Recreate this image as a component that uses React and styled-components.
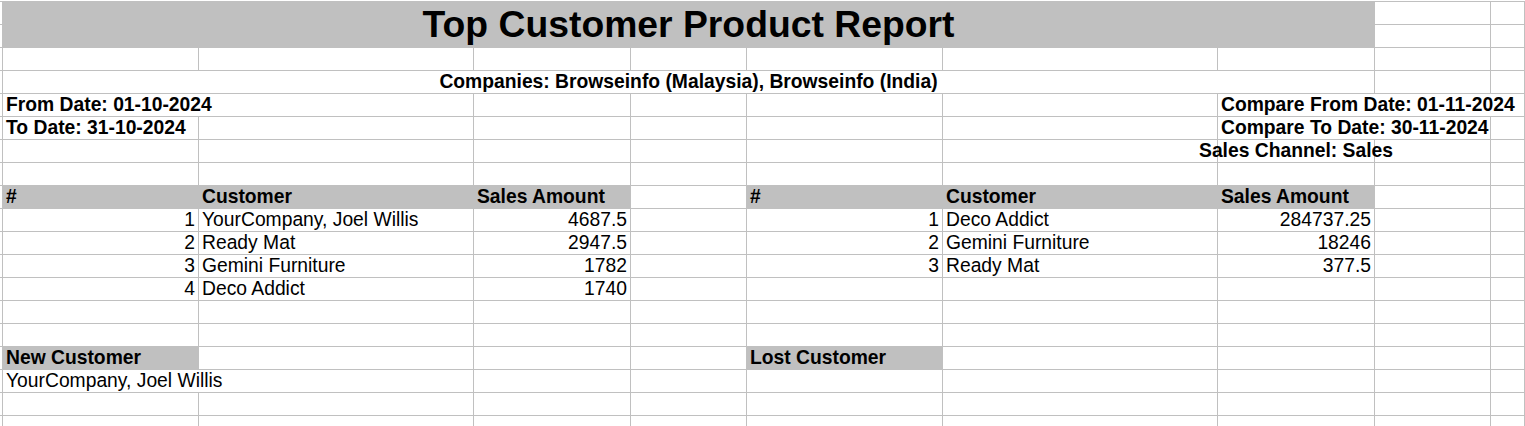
import React from "react";
import styled, { createGlobalStyle } from "styled-components";

/* ================= GLOBAL ================= */

const GlobalStyle = createGlobalStyle`
  html, body {
    margin: 0;
    padding: 0;
    background: #ffffff;
    overflow: hidden;
  }
  body {
    font-family: "Liberation Sans", Arial, sans-serif;
    color: #000000;
  }
`;

const GRID = "#c0c0c0";
const FILL = "#c0c0c0";

/* ================= SHEET ================= */

const Sheet = styled.div`
  display: grid;
  grid-template-columns: 3px 196px 275px 157px 116px 196px 275px 157px 116px 34px;
  grid-auto-rows: 23px;
  margin-top: 1px;
  border-top: 1px solid ${GRID};
  width: max-content;
`;

const Cell = styled.div`
  box-sizing: border-box;
  display: flex;
  align-items: ${(p) => (p.$title ? "center" : "flex-end")};
  justify-content: ${(p) =>
    p.$align === "right"
      ? "flex-end"
      : p.$align === "center"
      ? "center"
      : "flex-start"};
  grid-column: span ${(p) => p.$span || 1};
  grid-row: span ${(p) => p.$rows || 1};
  padding: ${(p) => (p.$edge ? "0" : p.$title ? "0 3px" : "0 3px 2px")};
  border-right: 1px solid ${(p) => (p.$fill ? FILL : GRID)};
  border-bottom: 1px solid ${GRID};
  background: ${(p) => (p.$fill ? FILL : "transparent")};
  white-space: nowrap;
  overflow: visible;
  min-width: 0;
`;

const Text = styled.span`
  font-size: ${(p) => (p.$title ? "37.3px" : "19.3px")};
  line-height: ${(p) => (p.$title ? "normal" : "19px")};
  font-weight: ${(p) => (p.$bold ? 700 : 400)};
`;

/* ================= DATA ================= */

const blank = {};
const row = (...cells) => cells;
const empty = (n) => Array.from({ length: n }, () => blank);

const left = [
  ["1", "YourCompany, Joel Willis", "4687.5"],
  ["2", "Ready Mat", "2947.5"],
  ["3", "Gemini Furniture", "1782"],
  ["4", "Deco Addict", "1740"],
];

const right = [
  ["1", "Deco Addict", "284737.25"],
  ["2", "Gemini Furniture", "18246"],
  ["3", "Ready Mat", "377.5"],
];

const dataRow = (l, r) => [
  ...(l
    ? [
        { t: l[0], a: "right" },
        { t: l[1] },
        { t: l[2], a: "right" },
      ]
    : empty(3)),
  blank,
  ...(r
    ? [
        { t: r[0], a: "right" },
        { t: r[1] },
        { t: r[2], a: "right" },
      ]
    : empty(3)),
  blank,
  blank,
];

const rows = [
  row({ t: "Top Customer Product Report", span: 7, rows: 2, title: true, b: true, fill: true, a: "center" }, blank, blank),
  row(blank, blank),
  empty(9),
  row({ t: "Companies: Browseinfo (Malaysia), Browseinfo (India)", span: 7, b: true, a: "center" }, blank, blank),
  row({ t: "From Date: 01-10-2024", span: 2, b: true }, ...empty(4), { t: "Compare From Date: 01-11-2024", span: 3, b: true }),
  row({ t: "To Date: 31-10-2024", b: true }, ...empty(5), { t: "Compare To Date: 30-11-2024", span: 2, b: true }, blank),
  row(...empty(6), { t: "Sales Channel: Sales", b: true, a: "center" }, blank, blank),
  empty(9),
  row(
    { t: "#", b: true, fill: true },
    { t: "Customer", b: true, fill: true },
    { t: "Sales Amount", b: true, fill: true },
    blank,
    { t: "#", b: true, fill: true },
    { t: "Customer", b: true, fill: true },
    { t: "Sales Amount", b: true, fill: true },
    blank,
    blank
  ),
  dataRow(left[0], right[0]),
  dataRow(left[1], right[1]),
  dataRow(left[2], right[2]),
  dataRow(left[3], null),
  empty(9),
  empty(9),
  row({ t: "New Customer", b: true, fill: true }, ...empty(3), { t: "Lost Customer", b: true, fill: true }, ...empty(4)),
  row({ t: "YourCompany, Joel Willis", span: 2 }, ...empty(7)),
  empty(9),
  empty(9),
];

/* ================= COMPONENT ================= */

function App() {
  return (
    <>
      <GlobalStyle />
      <Sheet>
        {rows.map((cells, r) => (
          <React.Fragment key={r}>
            {/* row edge: the 2px strip left of column A */}
            <Cell $edge />
            {cells.map((c, i) => (
              <Cell
                key={i}
                $span={c.span}
                $rows={c.rows}
                $align={c.a}
                $fill={c.fill}
                $title={c.title}
              >
                {c.t && (
                  <Text $bold={c.b} $title={c.title}>
                    {c.t}
                  </Text>
                )}
              </Cell>
            ))}
          </React.Fragment>
        ))}
      </Sheet>
    </>
  );
}

export default App;
